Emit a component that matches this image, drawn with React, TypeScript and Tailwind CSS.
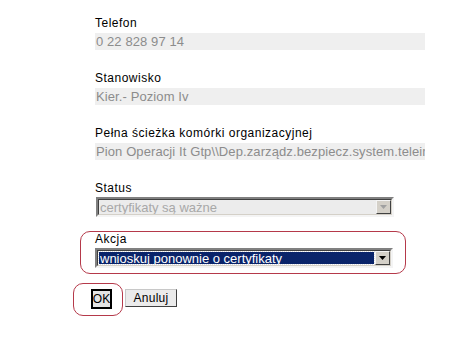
import React from 'react'

const fields = [
  { label: 'Telefon', value: '0 22 828 97 14' },
  { label: 'Stanowisko', value: 'Kier.- Poziom Iv' },
  { label: 'Pełna ścieżka komórki organizacyjnej', value: 'Pion Operacji It Gtp\\\\Dep.zarządz.bezpiecz.system.teleinformatycznych' },
]

function Arrow({ color }: { color: string }) {
  return (
    <svg width="7" height="4" viewBox="0 0 7 4">
      <path d="M0 0h7L3.5 4z" fill={color} />
    </svg>
  )
}

function Select({ value, active }: { value: string; active?: boolean }) {
  return (
    <div className="flex h-[20px] w-[298px] border-2 border-t-[#808080] border-l-[#808080] border-r-[#f4f4f4] border-b-[#f4f4f4]">
      <div className={`flex flex-1 border border-t-[#404040] border-l-[#404040] border-r-[#d4d0c8] border-b-[#d4d0c8] ${active ? 'bg-white' : 'bg-[#ececec]'}`}>
        <div className={`flex flex-1 items-center overflow-hidden whitespace-nowrap pl-[1px] text-[13px] leading-none ${active ? 'm-[1px] bg-[#0a246a] text-white outline-1 outline-dotted outline-[#e0e0e0]' : 'text-[#a8a8a8]'}`}>
          {value}
        </div>
        <div className="flex w-[15px] items-center justify-center border border-t-[#f4f4f4] border-l-[#f4f4f4] border-r-[#404040] border-b-[#404040] bg-[#d4d0c8]">
          <Arrow color={active ? '#000' : '#a0a0a0'} />
        </div>
      </div>
    </div>
  )
}

export default function App() {
  return (
    <div className="h-[340px] w-[453px] overflow-hidden bg-white font-['Liberation_Sans',Arial,sans-serif] text-black">
      <div className="pl-[95px] pt-[14px]">
        {fields.map((f) => (
          <div key={f.label} className="mb-[19px]">
            <div className="h-[16px] pt-[1px] text-[12px] leading-[16px] tracking-[0.5px]">{f.label}</div>
            <div className="mt-[3px] flex h-[17px] w-[330px] items-center overflow-hidden whitespace-nowrap bg-[#efefef] pl-[1px] text-[13px] tracking-[0.1px] text-[#8c8c8c]">
              {f.value}
            </div>
          </div>
        ))}
        <div className="h-[16px] pt-[1px] text-[12px] leading-[16px] tracking-[0.5px]">Status</div>
        <div className="mt-[2px] pl-[1px]">
          <Select value="certyfikaty są ważne" />
        </div>
      </div>

      <div className="ml-[80px] mt-[14px] h-[43px] w-[326px] rounded-[10px] border border-[#b5394a] pl-[14px]">
        <div className="h-[15px] text-[12px] leading-[15px] tracking-[0.5px]">Akcja</div>
        <div className="mt-[1px]">
          <Select value="wnioskuj ponownie o certyfikaty" active />
        </div>
      </div>

      <div className="mt-[9px] flex items-start">
        <div className="ml-[73px] flex h-[33px] w-[50px] rounded-[10px] border border-[#b5394a] pl-[17px] pt-[5px]">
          <button className="flex h-[20px] w-[21px] items-center justify-center border-2 border-black bg-[#e4e4e4] px-0 text-[12px] leading-none">
            OK
          </button>
        </div>
        <button className="ml-[2px] mt-[6px] flex h-[18px] w-[52px] items-center justify-center border border-t-[#c8c8c8] border-l-[#c8c8c8] border-r-[#404040] border-b-[#404040] bg-[#ebebeb] text-[12px] leading-none tracking-[0.3px]">
          Anuluj
        </button>
      </div>
    </div>
  )
}
